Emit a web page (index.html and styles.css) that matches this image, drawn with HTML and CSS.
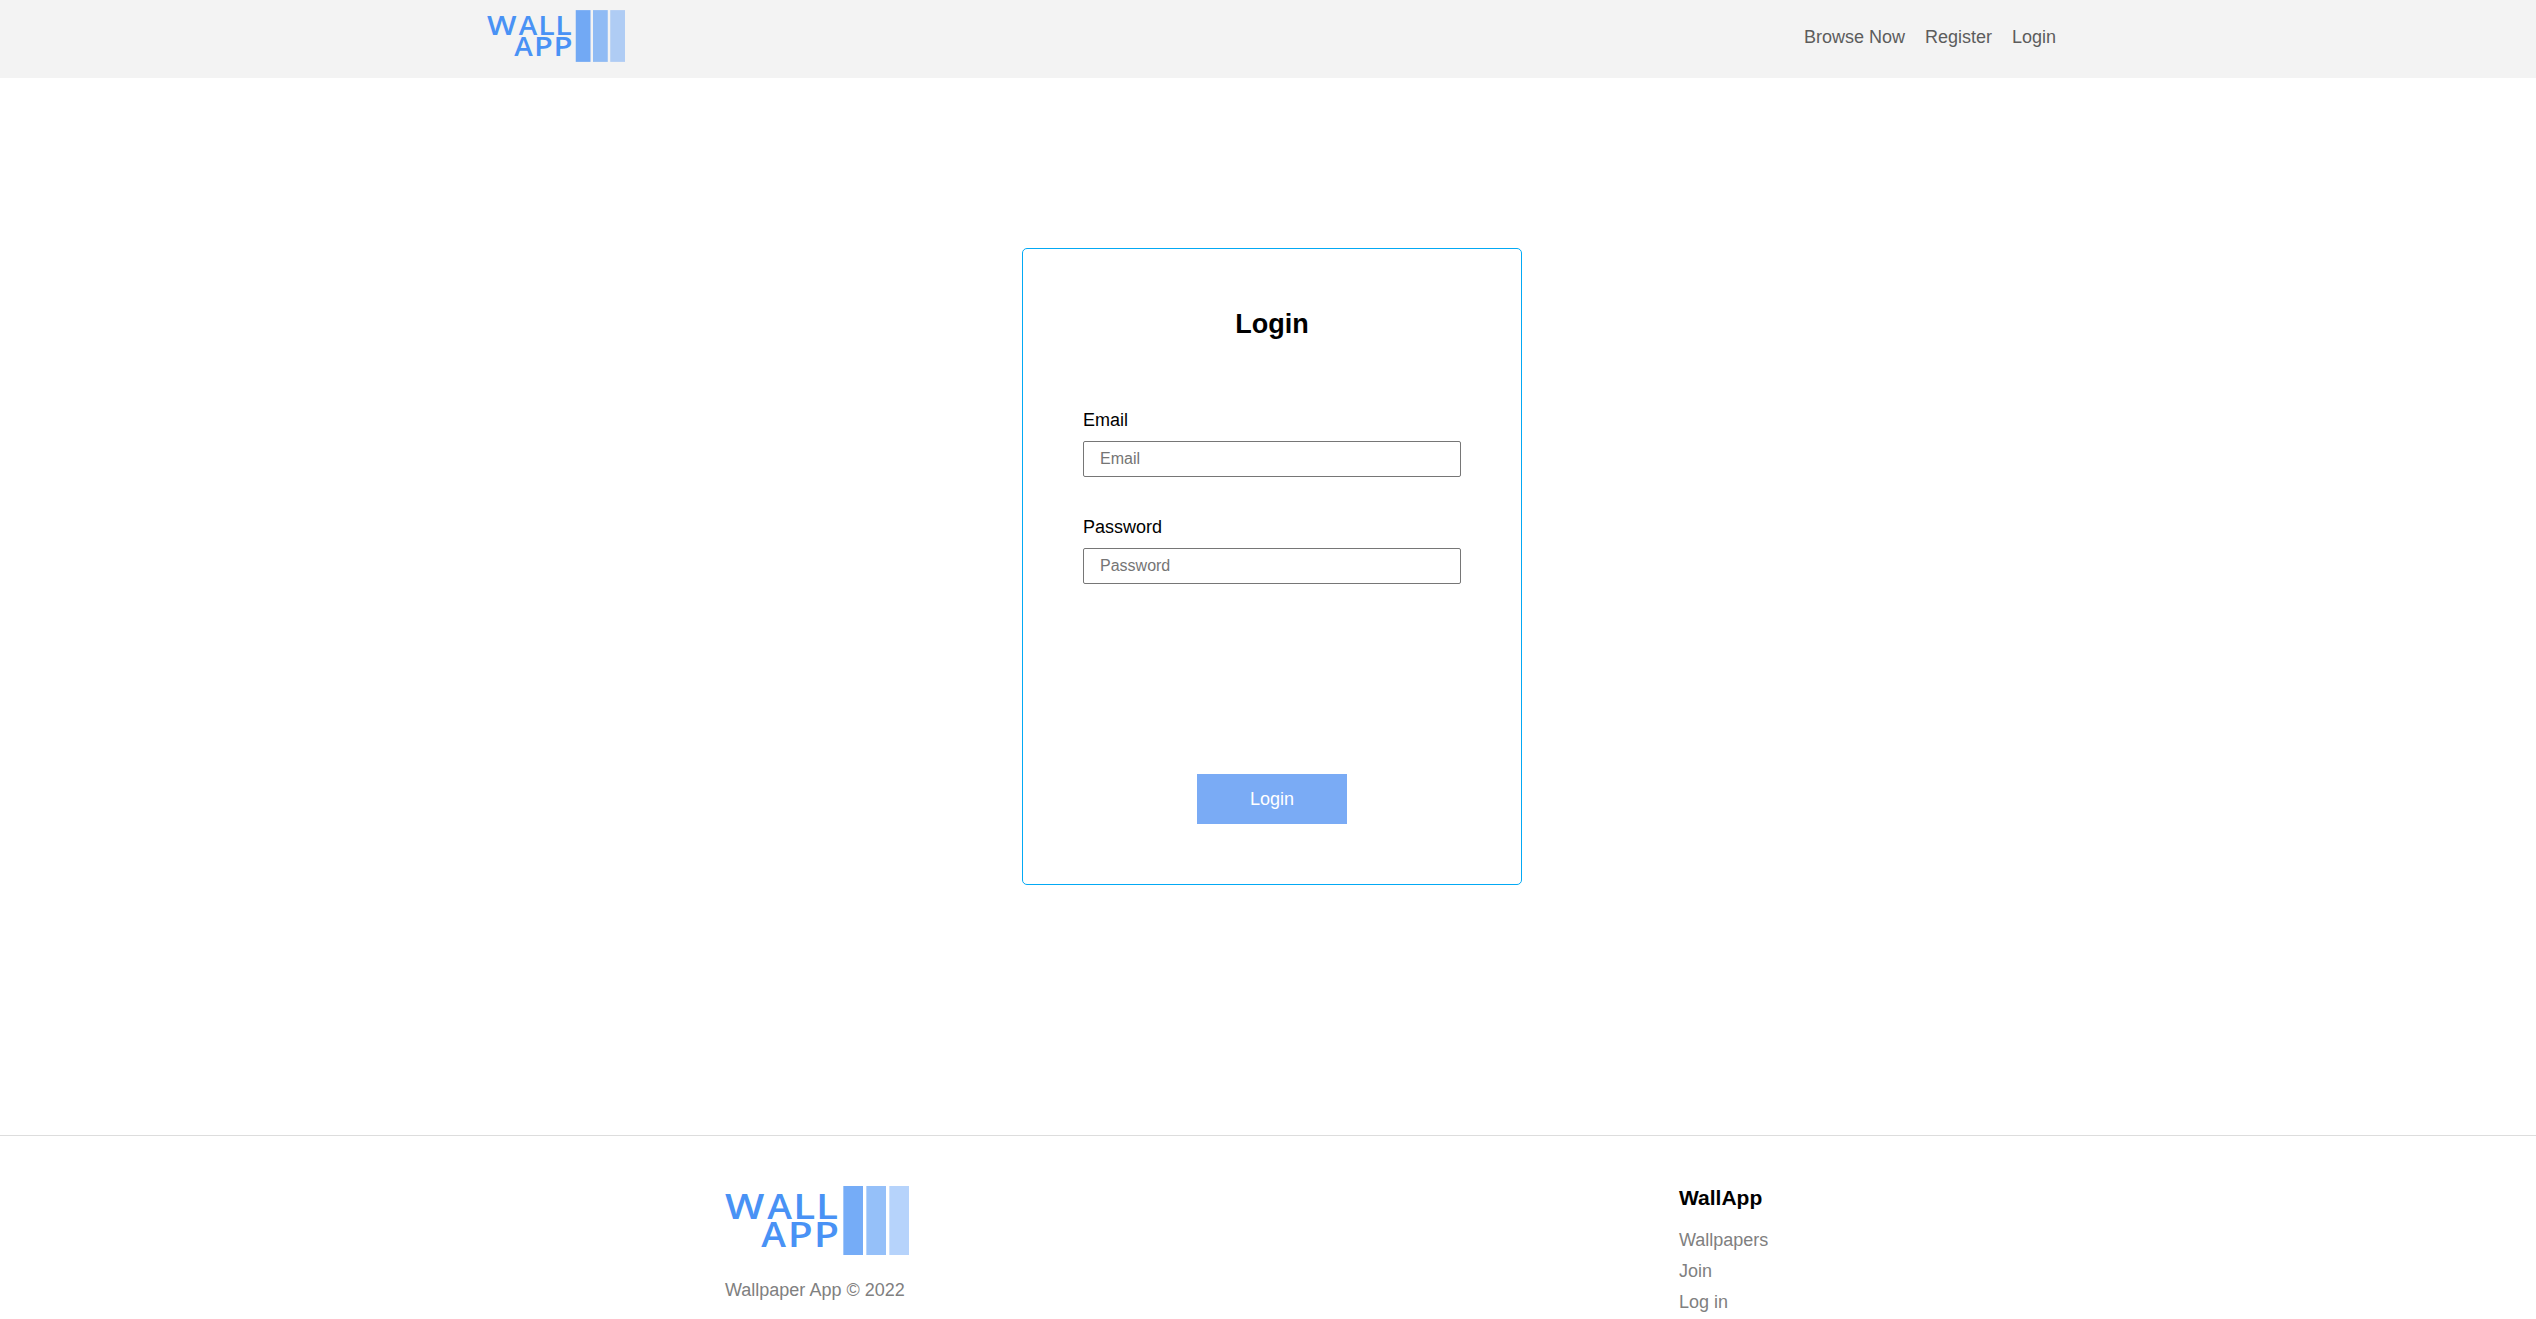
FILE: index.html
```html
<!DOCTYPE html>
<html lang="en">
<head>
<meta charset="utf-8">
<title>WallApp</title>
<link rel="stylesheet" href="styles.css">
</head>
<body>
<svg class="defs" width="0" height="0" aria-hidden="true">
  <symbol id="logo" viewBox="0 0 552 207" overflow="visible">
    <g class="logo-text">
      <text transform="translate(0 100)" textLength="118" lengthAdjust="spacingAndGlyphs">W</text>
      <text transform="translate(127 100)" textLength="74" lengthAdjust="spacingAndGlyphs">A</text>
      <text transform="translate(205 100)" textLength="66" lengthAdjust="spacingAndGlyphs">L</text>
      <text transform="translate(273 100)" textLength="66" lengthAdjust="spacingAndGlyphs">L</text>
      <text transform="translate(109 182)" textLength="74" lengthAdjust="spacingAndGlyphs">A</text>
      <text transform="translate(188 182)" textLength="75" lengthAdjust="spacingAndGlyphs">P</text>
      <text transform="translate(266 182)" textLength="76" lengthAdjust="spacingAndGlyphs">P</text>
    </g>
    <rect x="355" width="59" height="207" fill="#4992f5" fill-opacity=".76"/>
    <rect x="424" width="59" height="207" fill="#4992f5" fill-opacity=".58"/>
    <rect x="493" width="59" height="207" fill="#4992f5" fill-opacity=".4"/>
  </symbol>
</svg>
<header class="navbar">
  <a href="#"><svg class="nav-logo"><use href="#logo"/></svg></a>
  <nav class="nav-links">
    <a href="#">Browse Now</a>
    <a href="#">Register</a>
    <a href="#">Login</a>
  </nav>
</header>
<main class="content">
  <form class="card">
    <h2>Login</h2>
    <label for="email">Email</label>
    <input id="email" type="email" placeholder="Email">
    <label for="password">Password</label>
    <input id="password" type="password" placeholder="Password">
    <button type="button">Login</button>
  </form>
</main>
<footer class="footer">
  <div class="brand">
    <svg class="footer-logo"><use href="#logo"/></svg>
    <p>Wallpaper App © 2022</p>
  </div>
  <div class="footer-links">
    <h3>WallApp</h3>
    <a href="#">Wallpapers</a>
    <a href="#">Join</a>
    <a href="#">Log in</a>
  </div>
</footer>
</body>
</html>
```
FILE: styles.css
```css
* { box-sizing: border-box; }
html, body { height: 100%; }
body {
  margin: 0;
  display: flex;
  flex-direction: column;
  background: #fff;
  color: #000;
  font: 18px/21px "Liberation Sans", Arial, sans-serif;
  overflow: hidden;
}
a { color: inherit; text-decoration: none; }
h2, h3, p { margin: 0; }
.defs { display: none; }
.logo-text { font: 600 105px "Open Sans", sans-serif; fill: #4992f5; }

.navbar {
  height: 78px;
  flex: none;
  display: flex;
  justify-content: space-between;
  padding: 10px 480px 0 487px;
  background: #f3f3f3;
}
.nav-logo { display: block; width: 138px; height: 52px; }
.nav-links { display: flex; gap: 20px; padding-top: 17px; color: #5c5c5c; }

.content {
  flex: none;
  height: 1057px;
  padding: 170px 0 0 8px;
  display: flex;
  justify-content: center;
  align-items: flex-start;
}
.card {
  width: 500px;
  height: 637px;
  padding: 60px;
  border: 1px solid #03a9f4;
  border-radius: 5px;
  display: flex;
  flex-direction: column;
}
.card h2 {
  font-size: 27px;
  line-height: 31px;
  text-align: center;
  margin-bottom: 70px;
}
.card label { margin-bottom: 10px; }
.card input {
  height: 36px;
  margin: 0 0 40px;
  padding: 0 16px;
  border: 1px solid #767676;
  border-radius: 2px;
  font: 16px "Liberation Sans", Arial, sans-serif;
}
.card input::placeholder { color: #757575; }
.card button {
  width: 150px;
  height: 50px;
  margin: auto auto 0;
  padding: 0;
  border: 0;
  background: #7aabf5;
  color: #fff;
  font: 18px "Liberation Sans", Arial, sans-serif;
}

.footer {
  flex: 1;
  border-top: 1px solid #ddd;
  padding: 50px 0 0 725px;
  display: flex;
}
.brand { width: 954px; color: #808080; }
.footer-logo { display: block; width: 184px; height: 69px; margin-bottom: 25px; }
.footer-links { display: flex; flex-direction: column; gap: 10px; color: #808080; }
.footer-links h3 { font-size: 21px; line-height: 24px; color: #000; margin-bottom: 10px; }
```
